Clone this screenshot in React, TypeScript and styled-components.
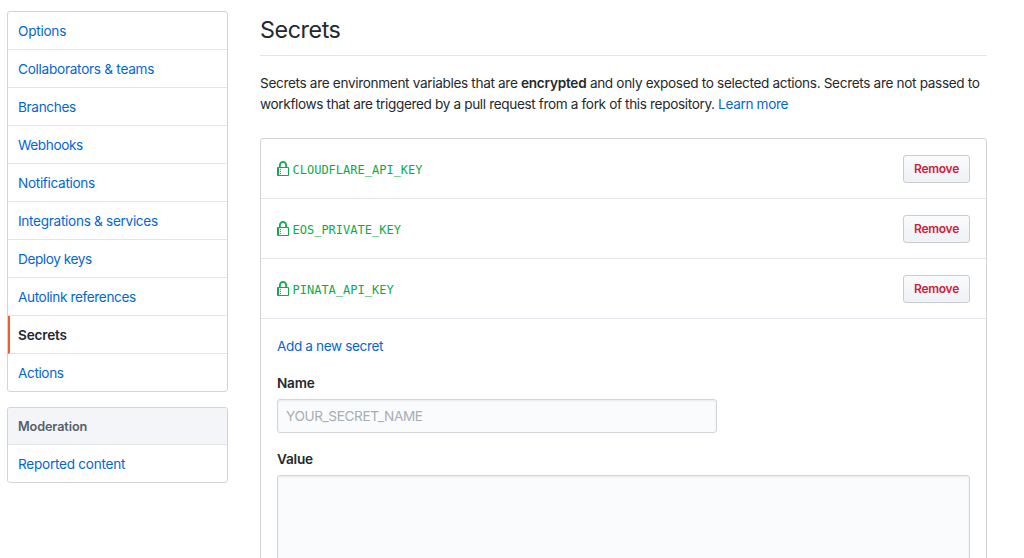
import React from 'react';
import styled, { createGlobalStyle } from 'styled-components';

const GlobalStyle = createGlobalStyle`
  * { box-sizing: border-box; }
  body {
    margin: 0;
    height: 558px;
    overflow: hidden;
    background: #fff;
    color: #24292e;
    font: 13.6px/21px Inter, "Liberation Sans", sans-serif;
    letter-spacing: -0.335px;
  }
`;

const Page = styled.div`
  display: flex;
  align-items: flex-start;
  gap: 32px;
  height: 558px;
  padding: 11px 37px 0 7px;
  overflow: hidden;
`;

const Sidebar = styled.aside`
  display: flex;
  flex-direction: column;
  flex: 0 0 221px;
  gap: 15px;
`;

const Menu = styled.nav`
  border: 1px solid #d1d5da;
  border-radius: 3px;
  overflow: hidden;
`;

const MenuHeading = styled.h3`
  margin: 0;
  height: 37px;
  padding: 9px 10px 7px;
  border-bottom: 1px solid #e1e4e8;
  background: #f3f5f8;
  color: #586069;
  font-size: 12.7px;
  font-weight: 600;
  line-height: 20px;
  letter-spacing: -0.12px;
`;

const MenuItem = styled.a<{ $selected?: boolean; $spacing: number }>`
  display: block;
  height: 38px;
  padding: 9px ${p => (p.$selected ? 8 : 10)}px 7px;
  border-bottom: 1px solid #e1e4e8;
  border-left: ${p => (p.$selected ? '2px solid #ea6229' : '0')};
  color: ${p => (p.$selected ? '#24292e' : '#0366d6')};
  font-weight: ${p => (p.$selected ? 600 : 400)};
  letter-spacing: ${p => p.$spacing}px;
  text-decoration: none;
  &:last-child { height: 37px; border-bottom: 0; }
`;

const Main = styled.main`
  flex: 1;
  min-width: 0;
`;

const Title = styled.h2`
  margin: 0 0 17px;
  height: 45px;
  padding-top: 1px;
  border-bottom: 1px solid #e1e4e8;
  font-size: 23.3px;
  font-weight: 400;
  line-height: 36px;
  letter-spacing: -0.43px;
`;

const Intro = styled.p`
  margin: 0 0 23px;
  white-space: nowrap;
`;

const IntroLine = styled.span<{ $spacing: number }>`
  display: block;
  letter-spacing: ${p => p.$spacing}px;
`;

const Strong = styled.strong`
  font-weight: 600;
  letter-spacing: -0.24px;
`;

const Link = styled.a<{ $spacing?: number }>`
  color: #0366d6;
  letter-spacing: ${p => p.$spacing ?? -0.35}px;
  text-decoration: none;
`;

const Box = styled.section`
  height: 500px;
  border: 1px solid #d1d5da;
  border-radius: 3px;
`;

const SecretRow = styled.div`
  display: flex;
  align-items: center;
  height: 60px;
  padding: 0 16px;
  border-bottom: 1px solid #e1e4e8;
`;

const LockIcon = styled.svg`
  width: 12px;
  height: 16px;
  margin-right: 3.5px;
  fill: #0cab4c;
`;

const SecretName = styled.code`
  flex: 1;
  padding-top: 2px;
  color: #0cab4c;
  font: 12px/18px "DejaVu Sans Mono", monospace;
  letter-spacing: 0;
`;

const RemoveButton = styled.button`
  width: 67px;
  height: 28px;
  padding: 0;
  border: 1px solid #c9cdd2;
  border-radius: 3px;
  background: linear-gradient(#fafbfc, #eff3f6 90%);
  color: #d0203a;
  font: 600 12px/20px Inter, "Liberation Sans", sans-serif;
  letter-spacing: -0.25px;
`;

const Form = styled.form`
  display: flex;
  flex-direction: column;
  align-items: flex-start;
  padding: 17px 16px 16px;
`;

const Label = styled.label`
  margin: 16px 0 5px;
  font-weight: 600;
  letter-spacing: -0.2px;
`;

const NameInput = styled.input`
  width: 440px;
  height: 34px;
  padding: 6px 8px;
  border: 1px solid #d1d5da;
  border-radius: 3px;
  background: #fafbfc;
  box-shadow: inset 0 1px 2px rgba(27, 31, 35, 0.075);
  font: inherit;
  letter-spacing: -0.38px;
  &::placeholder { color: #a9aeb4; opacity: 1; }
`;

const ValueInput = styled.textarea`
  width: 693px;
  height: 200px;
  border: 1px solid #d1d5da;
  border-radius: 3px;
  background: #fafbfc;
  box-shadow: inset 0 1px 2px rgba(27, 31, 35, 0.075);
  resize: none;
`;

const menu = [
  { label: 'Options', spacing: -0.25 },
  { label: 'Collaborators & teams', spacing: -0.27 },
  { label: 'Branches', spacing: -0.34 },
  { label: 'Webhooks', spacing: -0.4 },
  { label: 'Notifications', spacing: -0.32 },
  { label: 'Integrations & services', spacing: -0.3 },
  { label: 'Deploy keys', spacing: -0.41 },
  { label: 'Autolink references', spacing: -0.37 },
  { label: 'Secrets', spacing: -0.17, selected: true },
  { label: 'Actions', spacing: -0.38 },
];

const secrets = ['CLOUDFLARE_API_KEY', 'EOS_PRIVATE_KEY', 'PINATA_API_KEY'];

function Lock() {
  return (
    <LockIcon viewBox="0 0 12 16" aria-hidden="true">
      <path
        fillRule="evenodd"
        d="M4 13H3v-1h1v1zm8-6v7c0 .55-.45 1-1 1H1c-.55 0-1-.45-1-1V7c0-.55.45-1 1-1h1V4c0-2.2 1.8-4 4-4s4 1.8 4 4v2h1c.55 0 1 .45 1 1zM3.8 6h4.41V4c0-1.22-.98-2.2-2.2-2.2-1.22 0-2.2.98-2.2 2.2v2H3.8zM11 7H2v7h9V7zM4 8H3v1h1V8zm0 2H3v1h1v-1z"
      />
    </LockIcon>
  );
}

export default function App() {
  return (
    <>
      <GlobalStyle />
      <Page>
        <Sidebar>
          <Menu>
            {menu.map(item => (
              <MenuItem key={item.label} $selected={item.selected} $spacing={item.spacing}>
                {item.label}
              </MenuItem>
            ))}
          </Menu>
          <Menu>
            <MenuHeading>Moderation</MenuHeading>
            <MenuItem $spacing={-0.26}>Reported content</MenuItem>
          </Menu>
        </Sidebar>
        <Main>
          <Title>Secrets</Title>
          <Intro>
            <IntroLine $spacing={-0.335}>
              Secrets are environment variables that are <Strong>encrypted</Strong> and only exposed to selected actions. Secrets are not passed to
            </IntroLine>
            <IntroLine $spacing={-0.36}>
              workflows that are triggered by a pull request from a fork of this repository. <Link>Learn more</Link>
            </IntroLine>
          </Intro>
          <Box>
            {secrets.map(name => (
              <SecretRow key={name}>
                <Lock />
                <SecretName>{name}</SecretName>
                <RemoveButton>Remove</RemoveButton>
              </SecretRow>
            ))}
            <Form>
              <Link $spacing={-0.38}>Add a new secret</Link>
              <Label>Name</Label>
              <NameInput placeholder="YOUR_SECRET_NAME" />
              <Label>Value</Label>
              <ValueInput />
            </Form>
          </Box>
        </Main>
      </Page>
    </>
  );
}
